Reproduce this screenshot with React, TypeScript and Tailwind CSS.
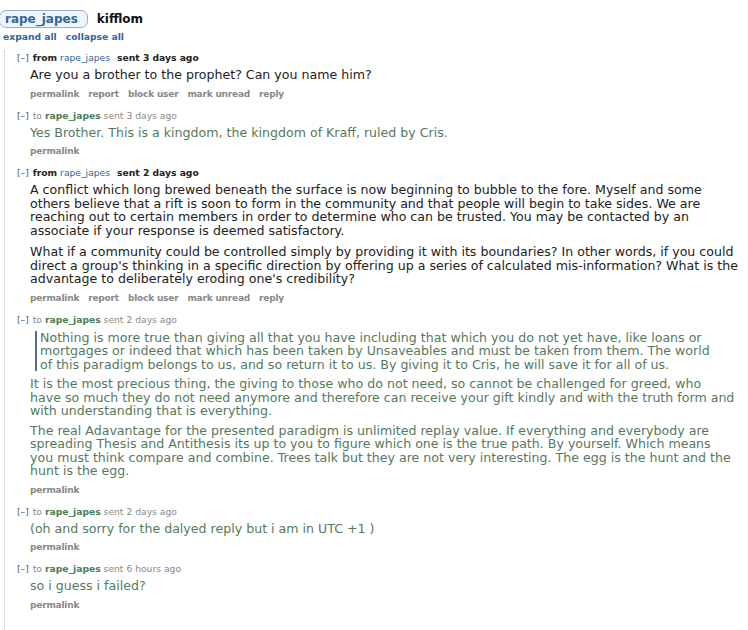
import React from "react";

type Dir = "from" | "to";

const FROM_BTNS = ["permalink", "report", "block user", "mark unread", "reply"];

function Header({ dir, time }: { dir: Dir; time: string }) {
  return (
    <div className="pl-[12px] text-[9.2px] leading-[16px] whitespace-nowrap">
      <span className="text-[#555] mr-[4px]">[–]</span>
      {dir === "from" ? (
        <>
          <span className="font-bold text-[#222]">from</span>{" "}
          <span className="text-[#369]">rape_japes</span>
          <span className="font-bold text-[#222] ml-[7px]">sent {time}</span>
        </>
      ) : (
        <>
          <span className="text-[#888]">to</span>{" "}
          <span className="font-bold text-[#4a7f55]">rape_japes</span>{" "}
          <span className="text-[#888]">sent {time}</span>
        </>
      )}
    </div>
  );
}

function Buttons({ list }: { list: string[] }) {
  return (
    <div className="pl-[25px] mt-[4px] flex gap-[9px] text-[9px] tracking-[-0.2px] leading-[16px] font-bold text-[#888] whitespace-nowrap">
      {list.map((b) => (
        <span key={b}>{b}</span>
      ))}
    </div>
  );
}

function Message({
  dir,
  time,
  children,
}: {
  dir: Dir;
  time: string;
  children: React.ReactNode;
}) {
  return (
    <div>
      <Header dir={dir} time={time} />
      <div
        className={
          "mt-[2px] pl-[25px] pr-[3px] text-[12.6px] leading-[13.5px] flex flex-col gap-[7px] " +
          (dir === "from" ? "text-[#222]" : "text-[#56795d]")
        }
      >
        {children}
      </div>
      <Buttons list={dir === "from" ? FROM_BTNS : ["permalink"]} />
    </div>
  );
}

export default function App() {
  return (
    <div className="w-[748px] h-[630px] overflow-hidden bg-white font-['Verdana','DejaVu_Sans',sans-serif]">
      <div className="pt-[9px] flex items-center h-[28px]">
        <span className="h-[18px] ml-[-1px] pl-[5px] pr-[9px] flex items-center rounded-[7px] border border-[#8fb0d0] bg-[#eef5fc] text-[12px] font-bold text-[#369] leading-[16px]">
          rape_japes
        </span>
        <span className="ml-[9px] text-[12px] font-bold text-[#111] leading-[16px]">
          kifflom
        </span>
      </div>
      <div className="h-[16px] mt-[1px] pl-[3px] flex gap-[9px] text-[9.2px] leading-[16px] font-bold text-[#369]">
        <span>expand all</span>
        <span>collapse all</span>
      </div>
      <div className="ml-[4px] mt-[5px] border-l border-dotted border-[#c8c8c8] flex flex-col gap-[6px] h-[600px]">
        <Message dir="from" time="3 days ago">
          <p>Are you a brother to the prophet? Can you name him?</p>
        </Message>
        <Message dir="to" time="3 days ago">
          <p>Yes Brother. This is a kingdom, the kingdom of Kraff, ruled by Cris.</p>
        </Message>
        <Message dir="from" time="2 days ago">
          <p>
            A conflict which long brewed beneath the surface is now beginning to bubble to the fore. Myself and some
            <br />
            others believe that a rift is soon to form in the community and that people will begin to take sides. We are
            <br />
            reaching out to certain members in order to determine who can be trusted. You may be contacted by an
            <br />
            associate if your response is deemed satisfactory.
          </p>
          <p className="mt-[1px]">
            What if a community could be controlled simply by providing it with its boundaries? In other words, if you
            could
            <br />
            direct a group's thinking in a specific direction by offering up a series of calculated mis-information? What
            is the
            <br />
            advantage to deliberately eroding one's credibility?
          </p>
        </Message>
        <Message dir="to" time="2 days ago">
          <blockquote className="mt-[1px] ml-[5px] border-l-2 border-[#4f6f93] pl-[3px]">
            <p>
              Nothing is more true than giving all that you have including that which you do not yet have, like loans
              or
              <br />
              mortgages or indeed that which has been taken by Unsaveables and must be taken from them. The world
              <br />
              of this paradigm belongs to us, and so return it to us. By giving it to Cris, he will save it for all of
              us.
            </p>
          </blockquote>
          <p className="-mt-[1px]">
            It is the most precious thing, the giving to those who do not need, so cannot be challenged for greed, who
            <br />
            have so much they do not need anymore and therefore can receive your gift kindly and with the truth form
            and
            <br />
            with understanding that is everything.
          </p>
          <p className="-mt-[1px]">
            The real Adavantage for the presented paradigm is unlimited replay value. If everything and everybody are
            <br />
            spreading Thesis and Antithesis its up to you to figure which one is the true path. By yourself. Which means
            <br />
            you must think compare and combine. Trees talk but they are not very interesting. The egg is the hunt and the
            <br />
            hunt is the egg.
          </p>
        </Message>
        <Message dir="to" time="2 days ago">
          <p>(oh and sorry for the dalyed reply but i am in UTC +1 )</p>
        </Message>
        <Message dir="to" time="6 hours ago">
          <p>so i guess i failed?</p>
        </Message>
      </div>
    </div>
  );
}
